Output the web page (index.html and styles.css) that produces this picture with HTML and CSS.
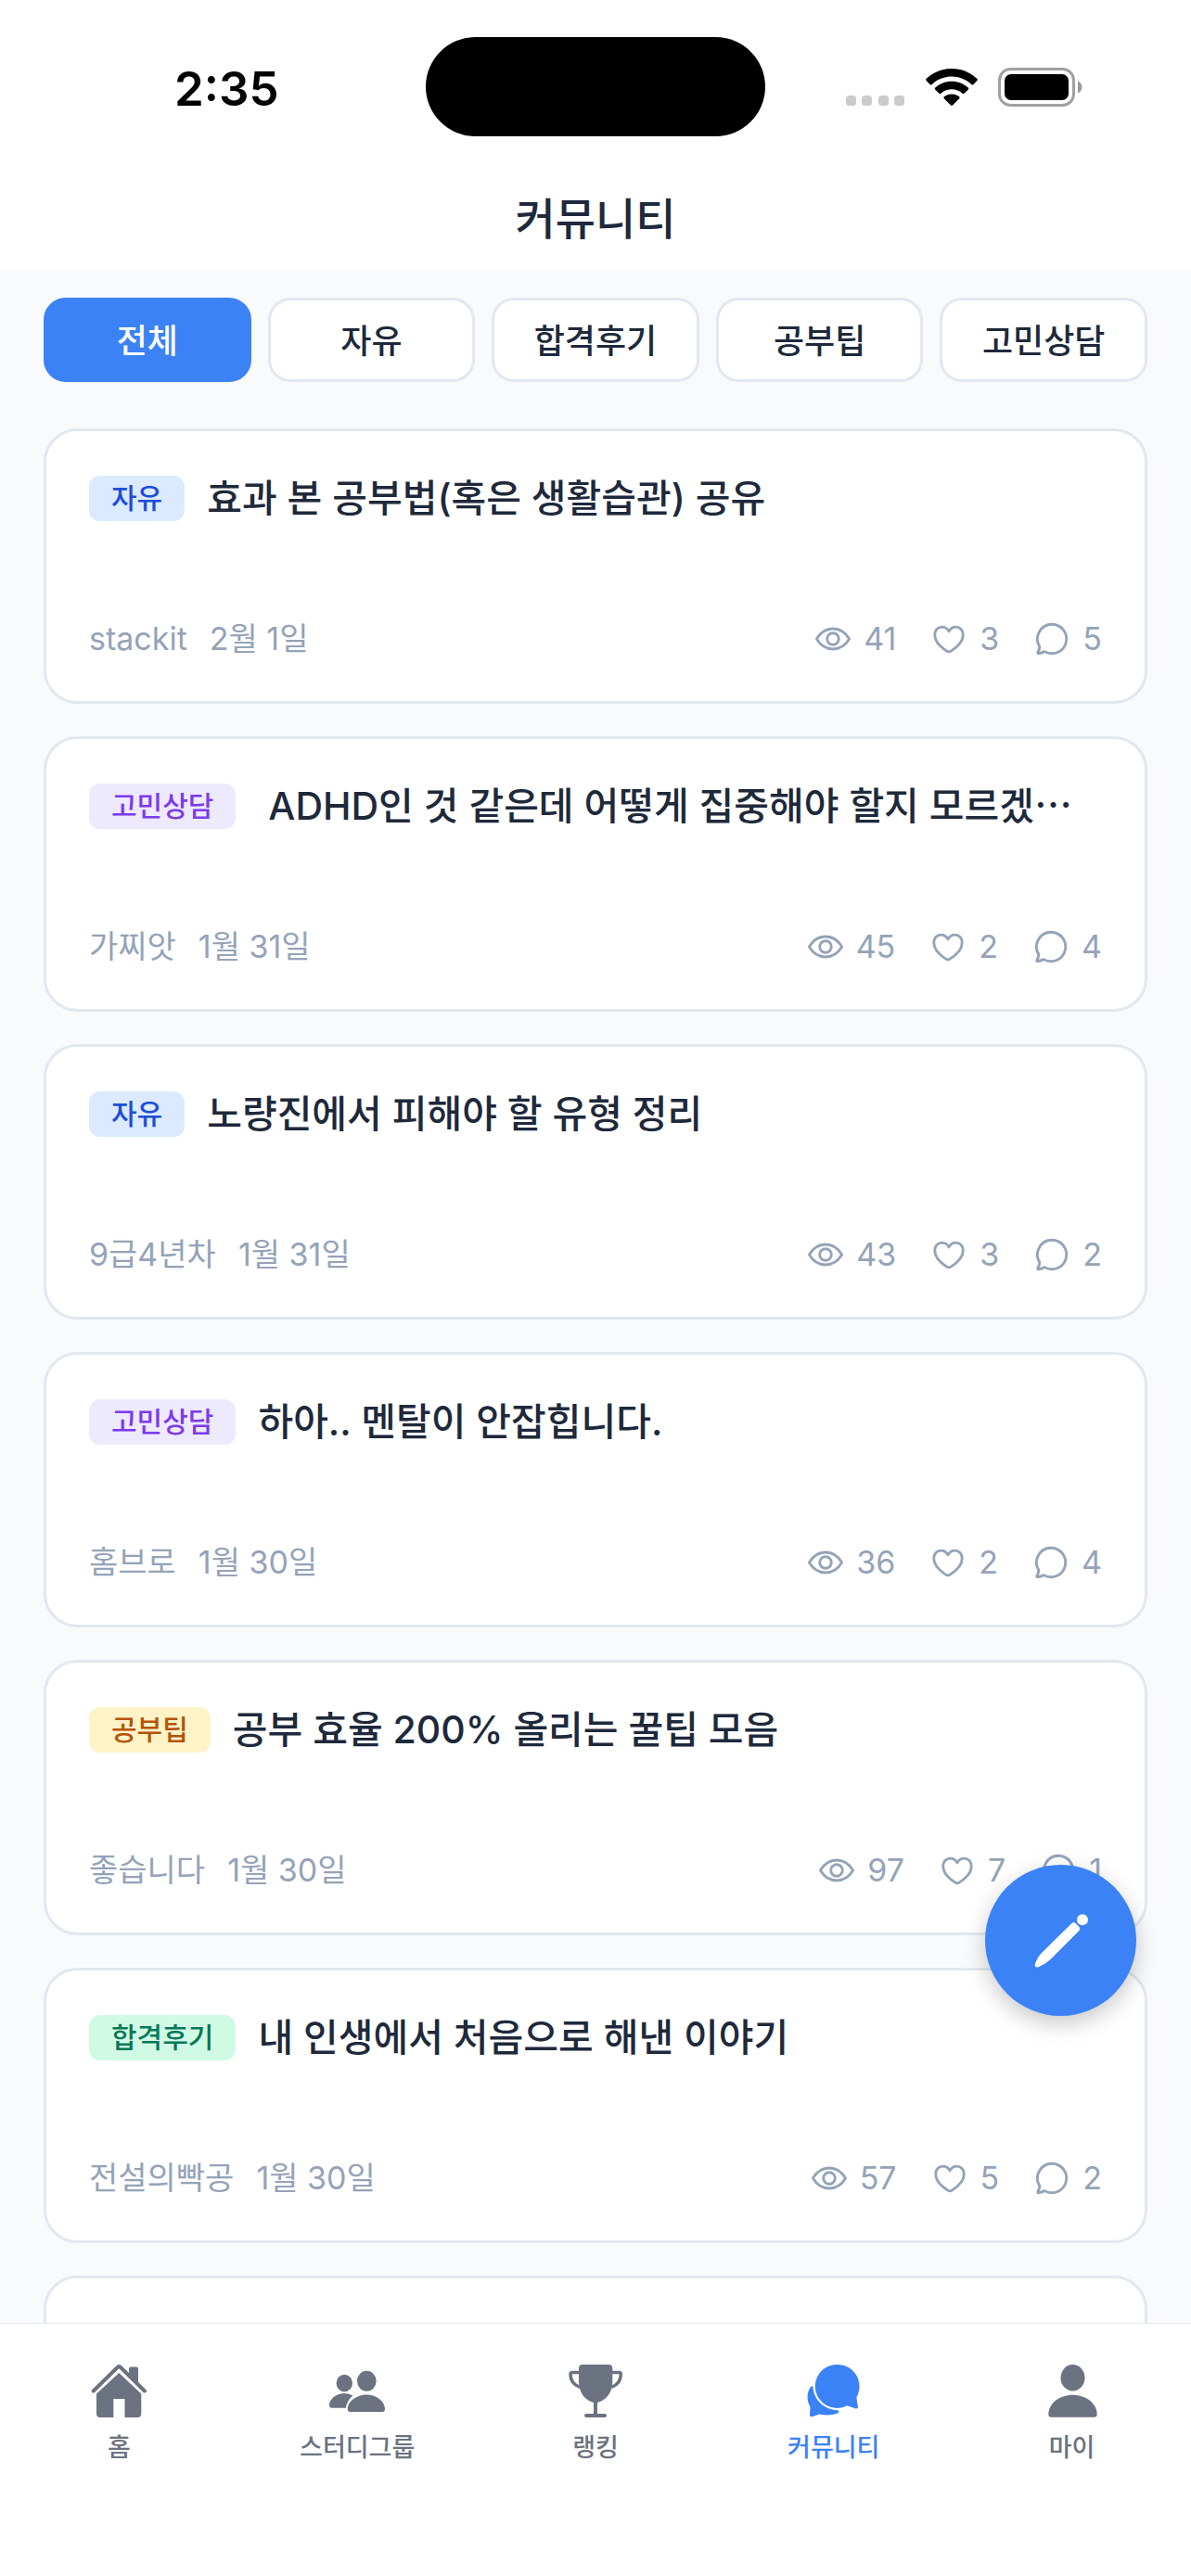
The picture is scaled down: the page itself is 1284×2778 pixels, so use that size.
FILE: index.html
```html
<!DOCTYPE html>
<html lang="ko">
	<head>
		<meta charset="utf-8">
		<meta name="viewport" content="width=device-width, initial-scale=1">
		<title>커뮤니티</title>
		<link rel="stylesheet" href="styles.css">
	</head>

	<body>
		<!-- shared icons for the post counters -->
		<svg class="sprite" width="0" height="0" aria-hidden="true">
			<symbol id="ic_eye" viewBox="0 0 42 42">
				<path d="M2.500 21C7 13.500 13.500 9.500 21 9.500S35 13.500 39.500 21C35 28.500 28.500 32.500 21 32.500S7 28.500 2.500 21Z"/>
				<circle cx="21" cy="21" r="6.600"/>
			</symbol>
			<symbol id="ic_heart" viewBox="0 0 42 42">
				<path d="M21 12.500C19 9 16.500 7.500 13.300 7.500C8.300 7.500 5 11.300 5 16.500C5 23.500 10.500 29.500 18.700 34.800Q21 36.400 23.300 34.800C31.500 29.500 37 23.500 37 16.500C37 11.300 33.700 7.500 28.700 7.500C25.500 7.500 23 9 21 12.500Z"/>
			</symbol>
			<symbol id="ic_chat" viewBox="0 0 42 42">
				<path d="M21 4.500A16.500 16.500 0 1 1 12.800 35.300Q9 37.300 5.800 37.500Q4.500 37.300 5.200 36Q7 33 7.200 29.800A16.500 16.500 0 0 1 21 4.500Z"/>
			</symbol>
		</svg>

		<div class="status_bar">
			<span class="clock">2:35</span>
			<span class="island"></span>
			<div class="status_icons">
				<svg width="64" height="42" viewBox="0 0 64 42" fill="#cbcbcb">
					<rect x="0" y="30" width="11" height="11" rx="3.500"/>
					<rect x="17" y="30" width="11" height="11" rx="3.500"/>
					<rect x="35" y="30" width="11" height="11" rx="3.500"/>
					<rect x="52" y="30" width="11" height="11" rx="3.500"/>
				</svg>
				<svg width="56" height="42" viewBox="0 0 56 42">
					<path d="M28 1C38.500 1 48 5 55.300 11.800Q56.400 13 55.300 14L51.500 18Q50.500 19 49.300 18C43.500 12.500 36 9.500 28 9.500S12.500 12.500 6.700 18Q5.500 19 4.500 18L.7 14Q-.4 13 .7 11.800C8 5 17.500 1 28 1Z"/>
					<path d="M28 14.700C35 14.700 41 17.200 45.700 21.500Q46.800 22.600 45.700 23.700L41.600 27.700Q40.600 28.600 39.500 27.700C36.300 24.900 32.300 23.300 28 23.300S19.700 24.900 16.500 27.700Q15.400 28.600 14.400 27.700L10.300 23.700Q9.200 22.600 10.300 21.500C15 17.200 21 14.700 28 14.700Z"/>
					<path d="M28 28.400C31.300 28.400 34 29.500 36.200 31.200Q37.200 32.200 36.200 33.300L29 40.500Q28 41.400 27 40.500L19.800 33.300Q18.800 32.200 19.800 31.200C22 29.500 24.700 28.400 28 28.400Z"/>
				</svg>
				<svg class="battery" width="92" height="42" viewBox="0 0 92 42">
					<rect x="1.500" y="1.500" width="80" height="39" rx="12" fill="none" stroke="#a0a0a0" stroke-width="3"/>
					<rect x="7" y="7" width="69" height="28" rx="7"/>
					<path d="M86 14.500Q90.500 16.500 90.500 21T86 27.500Z" fill="#999"/>
				</svg>
			</div>
		</div>

		<header class="page_header">
			<h1>커뮤니티</h1>
		</header>

		<main class="content">
			<div class="filters">
				<button type="button" class="filter active">전체</button>
				<button type="button" class="filter">자유</button>
				<button type="button" class="filter">합격후기</button>
				<button type="button" class="filter">공부팁</button>
				<button type="button" class="filter">고민상담</button>
			</div>

			<div class="posts">
				<article class="post">
					<div class="post_head">
						<span class="badge free">자유</span>
						<h2>효과 본 공부법(혹은 생활습관) 공유</h2>
					</div>
					<div class="post_meta">
						<span>stackit</span><span>2월 1일</span>
						<div class="counts">
							<span class="count"><svg><use href="#ic_eye"/></svg>41</span>
							<span class="count"><svg><use href="#ic_heart"/></svg>3</span>
							<span class="count"><svg><use href="#ic_chat"/></svg>5</span>
						</div>
					</div>
				</article>

				<article class="post">
					<div class="post_head">
						<span class="badge worry">고민상담</span>
						<h2> ADHD인 것 같은데 어떻게 집중해야 할지 모르겠<span class="dots">⋯</span></h2>
					</div>
					<div class="post_meta">
						<span>가찌앗</span><span>1월 31일</span>
						<div class="counts">
							<span class="count"><svg><use href="#ic_eye"/></svg>45</span>
							<span class="count"><svg><use href="#ic_heart"/></svg>2</span>
							<span class="count"><svg><use href="#ic_chat"/></svg>4</span>
						</div>
					</div>
				</article>

				<article class="post">
					<div class="post_head">
						<span class="badge free">자유</span>
						<h2>노량진에서 피해야 할 유형 정리</h2>
					</div>
					<div class="post_meta">
						<span>9급4년차</span><span>1월 31일</span>
						<div class="counts">
							<span class="count"><svg><use href="#ic_eye"/></svg>43</span>
							<span class="count"><svg><use href="#ic_heart"/></svg>3</span>
							<span class="count"><svg><use href="#ic_chat"/></svg>2</span>
						</div>
					</div>
				</article>

				<article class="post">
					<div class="post_head">
						<span class="badge worry">고민상담</span>
						<h2>하아.. 멘탈이 안잡힙니다.</h2>
					</div>
					<div class="post_meta">
						<span>홈브로</span><span>1월 30일</span>
						<div class="counts">
							<span class="count"><svg><use href="#ic_eye"/></svg>36</span>
							<span class="count"><svg><use href="#ic_heart"/></svg>2</span>
							<span class="count"><svg><use href="#ic_chat"/></svg>4</span>
						</div>
					</div>
				</article>

				<article class="post">
					<div class="post_head">
						<span class="badge tip">공부팁</span>
						<h2>공부 효율 200% 올리는 꿀팁 모음</h2>
					</div>
					<div class="post_meta">
						<span>좋습니다</span><span>1월 30일</span>
						<div class="counts">
							<span class="count"><svg><use href="#ic_eye"/></svg>97</span>
							<span class="count"><svg><use href="#ic_heart"/></svg>7</span>
							<span class="count"><svg><use href="#ic_chat"/></svg>1</span>
						</div>
					</div>
				</article>

				<article class="post">
					<div class="post_head">
						<span class="badge pass">합격후기</span>
						<h2>내 인생에서 처음으로 해낸 이야기</h2>
					</div>
					<div class="post_meta">
						<span>전설의빡공</span><span>1월 30일</span>
						<div class="counts">
							<span class="count"><svg><use href="#ic_eye"/></svg>57</span>
							<span class="count"><svg><use href="#ic_heart"/></svg>5</span>
							<span class="count"><svg><use href="#ic_chat"/></svg>2</span>
						</div>
					</div>
				</article>

				<article class="post"></article>
			</div>

			<button type="button" class="write" aria-label="글쓰기">
				<svg width="58" height="58" viewBox="0 0 58 58" fill="#fff">
					<path d="M40 10.500Q42.500 8 45 10.500L48 13.500Q50.500 16 48 18.500L17 49.500Q11.500 54.500 4 57.500Q.3 58 .8 54.500Q3.500 46 8.500 41.500Z"/>
					<circle cx="52" cy="6.200" r="6"/>
				</svg>
			</button>
		</main>

		<nav class="tab_bar">
			<a class="tab" href="#">
				<svg viewBox="0 0 60 60">
					<path d="M41 13V5.500Q41 3.500 43 3.500H49Q51 3.500 51 5.500V22Z"/>
					<path d="M2.700 29.500L28.600 4Q30.300 2.400 32 4L57.900 29.500" fill="none" stroke="currentColor" stroke-width="4" stroke-linecap="round"/>
					<path d="M30.300 10L54.300 32.500V54Q54.300 58 50.300 58H36.500V38H24.300V58H10Q6 58 6 54V32.500Z"/>
				</svg>
				홈
			</a>
			<a class="tab" href="#">
				<svg viewBox="0 0 60 60">
					<ellipse cx="40.300" cy="18.700" rx="10.300" ry="11"/>
					<path d="M40.300 33.500C51 33.500 60 41 60 49Q60 52 57 52H22.700Q19.700 52 19.700 49C19.700 41 29.500 33.500 40.300 33.500Z"/>
					<ellipse cx="16.300" cy="21" rx="8.700" ry="9.200"/>
					<path d="M16.300 32Q21.500 32 25.500 34.500Q19 39.500 17.800 47.700H3Q0 47.700 0 44.700C0 38 8 32 16.300 32Z"/>
				</svg>
				스터디그룹
			</a>
			<a class="tab" href="#">
				<svg viewBox="0 0 60 60">
					<path d="M12 5Q12 1 16 1H44.300Q48.300 1 48.300 5V20C48.300 32 40 40.500 32 42V54H40Q42 54 42 56T40 58H20Q18 58 18 56T20 54H28V42C20 40.500 12 32 12 20Z"/>
					<path d="M13 9.500H5Q3 9.500 3 11.500C3 17.500 6 22.500 13 25.500M47.300 9.500H55.300Q57.300 9.500 57.300 11.500C57.300 17.500 54.300 22.500 47.300 25.500" fill="none" stroke="currentColor" stroke-width="3.500"/>
				</svg>
				랭킹
			</a>
			<a class="tab active" href="#">
				<svg viewBox="0 0 60 60">
					<path d="M34 1A23.500 23.500 0 0 1 54.500 36Q54.700 41 56 46.500Q56 49 53.500 48.500Q48.500 46.700 44.200 45.300A23.500 23.500 0 1 1 34 1Z"/>
					<path d="M7.500 25C8 37.500 18 49.500 34 50.200Q37 51.500 34 53.500Q25 57 14.500 54.500L6.500 57.300Q3.800 57.500 4 55L4.500 46.500C.5 40 .5 31 5 25Q6.500 23.500 7.500 25Z"/>
				</svg>
				커뮤니티
			</a>
			<a class="tab" href="#">
				<svg viewBox="0 0 60 60">
					<ellipse cx="30.500" cy="15.300" rx="13" ry="14.200"/>
					<path d="M30.500 33.700C45 33.700 56.500 43 56.700 54.500Q56.700 57.700 53.500 57.700H7.500Q4.300 57.700 4.300 54.500C4.500 43 16 33.700 30.500 33.700Z"/>
				</svg>
				마이
			</a>
		</nav>
	</body>
</html>
```
FILE: styles.css
```css
* {
	box-sizing: border-box;
}

body {
	display: flex;
	flex-direction: column;
	height: 100vh;
	margin: 0;
	background-color: #ffffff;
	color: #1e293b;
	font-family: "Inter", "Noto Sans CJK KR", sans-serif;
}

h1, h2 {
	margin: 0;
	font-weight: 500;
}

button {
	font-family: inherit;
	cursor: pointer;
}

.sprite {
	position: absolute;
}

/* status bar */
.status_bar {
	display: grid;
	grid-template-columns: 1fr auto 1fr;
	align-items: center;
	padding: 40px 116px 0;
	color: #000000;
}

.clock {
	padding-top: 3px;
	padding-left: 72px;
	font-size: 51px;
	font-weight: 600;
}

.island {
	width: 366px;
	height: 107px;
	border-radius: 54px;
	background-color: #000000;
}

.status_icons {
	display: flex;
	justify-content: flex-end;
	gap: 22px;
}

/* header */
.page_header {
	display: flex;
	align-items: center;
	justify-content: center;
	height: 145px;
	padding-top: 26px;
}

.page_header h1 {
	font-size: 47px;
}

/* content */
.content {
	position: relative;
	flex: 1;
	min-height: 0;
	overflow: hidden;
	padding: 29px 47px 0;
	background-color: #f8fafc;
}

.filters {
	display: flex;
	gap: 18px;
	margin-bottom: 50px;
}

.filter {
	flex: 1;
	height: 91px;
	padding: 0 0 3px;
	border: 3px solid #e2e8f0;
	border-radius: 24px;
	background-color: #ffffff;
	color: #1e293b;
	font-size: 36px;
	font-weight: 500;
}

.filter.active {
	border-color: #3b82f6;
	background-color: #3b82f6;
	color: #ffffff;
}

.posts {
	display: flex;
	flex-direction: column;
	gap: 35px;
}

.post {
	flex: none;
	min-height: 297px;
	padding: 48px 46px 47px;
	border: 3px solid #e2e8f0;
	border-radius: 36px;
	background-color: #ffffff;
}

.post_head {
	display: flex;
	align-items: center;
	gap: 24px;
	margin-bottom: 107px;
}

.post_head h2 {
	font-size: 41px;
	line-height: 49px;
	white-space: pre;
}

.dots {
	font-family: "Noto Sans CJK KR", sans-serif;
	line-height: 1;
}

.badge {
	flex: none;
	padding: 0 24px;
	border-radius: 12px;
	font-size: 30px;
	font-weight: 500;
	line-height: 49px;
}

.badge.free {
	background-color: #dbeafe;
	color: #1d4ed8;
}

.badge.worry {
	background-color: #ede9fe;
	color: #7c3aed;
}

.badge.tip {
	background-color: #fef3c7;
	color: #b45309;
}

.badge.pass {
	background-color: #d1fae5;
	color: #047857;
}

.post_meta {
	display: flex;
	align-items: center;
	gap: 24px;
	color: #94a3b8;
	font-size: 34px;
	line-height: 40px;
}

.counts {
	display: flex;
	gap: 36px;
	margin-left: auto;
}

.count {
	display: flex;
	align-items: center;
	gap: 12px;
}

.count svg {
	width: 42px;
	height: 40px;
	fill: none;
	stroke: #94a3b8;
	stroke-width: 3;
	stroke-linejoin: round;
}

.write {
	position: absolute;
	right: 59px;
	bottom: 331px;
	display: flex;
	align-items: center;
	justify-content: center;
	width: 163px;
	height: 163px;
	padding: 0;
	border: none;
	border-radius: 50%;
	background-color: #3b82f6;
	box-shadow: 0 8px 24px rgba(0, 0, 0, 0.22);
}

/* bottom tabs */
.tab_bar {
	display: flex;
	height: 273px;
	padding-top: 43px;
	border-top: 1px solid #e2e8f0;
	background-color: #ffffff;
}

.tab {
	display: flex;
	flex: 1;
	flex-direction: column;
	align-items: center;
	gap: 13px;
	color: #6b7280;
	font-size: 27px;
	font-weight: 500;
	line-height: 36px;
	text-decoration: none;
}

.tab.active {
	color: #3b82f6;
}

.tab svg {
	width: 60px;
	height: 60px;
	fill: currentColor;
}
```
